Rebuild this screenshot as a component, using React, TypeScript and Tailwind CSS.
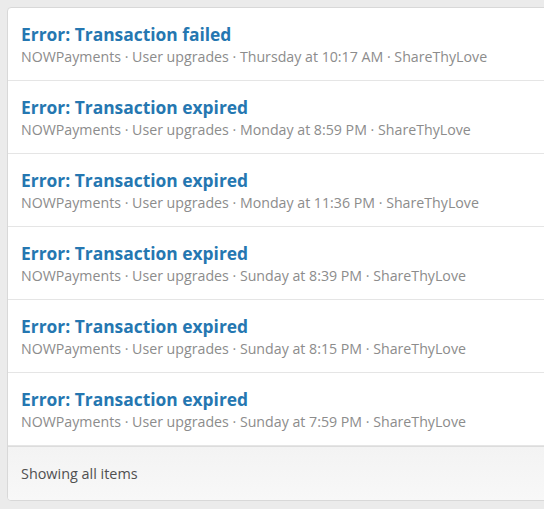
import React from 'react';

const rows = [
  { title: 'Error: Transaction failed', when: 'Thursday at 10:17 AM' },
  { title: 'Error: Transaction expired', when: 'Monday at 8:59 PM' },
  { title: 'Error: Transaction expired', when: 'Monday at 11:36 PM' },
  { title: 'Error: Transaction expired', when: 'Sunday at 8:39 PM' },
  { title: 'Error: Transaction expired', when: 'Sunday at 8:15 PM' },
  { title: 'Error: Transaction expired', when: 'Sunday at 7:59 PM' },
];

const App: React.FC = () => {
  return (
    <div className="min-h-[509px] bg-[#ebebeb] pt-[7px] pl-[7px] font-['Open_Sans',sans-serif]">
      <div className="-mr-2 overflow-hidden rounded-[4px] border border-[#d8d8d8] bg-white">
        {rows.map((row, idx) => (
          <div key={idx} className="flex h-[73px] flex-col justify-center border-b border-[#e5e5e5] px-[13px]">
            <a href="#" className="text-[17.4px] font-bold leading-[24px] text-[#2577b1]">
              {row.title}
            </a>
            <div className="mt-[1px] text-[14.2px] leading-[20px] text-[#8c8c8c]">
              NOWPayments · User upgrades · {row.when} · ShareThyLove
            </div>
          </div>
        ))}
        <div className="flex h-[54px] items-center border-t border-[#dcdcdc] bg-gradient-to-b from-[#f3f3f3] to-[#f8f8f8] px-[13px] text-[14.4px] text-[#505050]">
          Showing all items
        </div>
      </div>
    </div>
  );
};

export default App;
